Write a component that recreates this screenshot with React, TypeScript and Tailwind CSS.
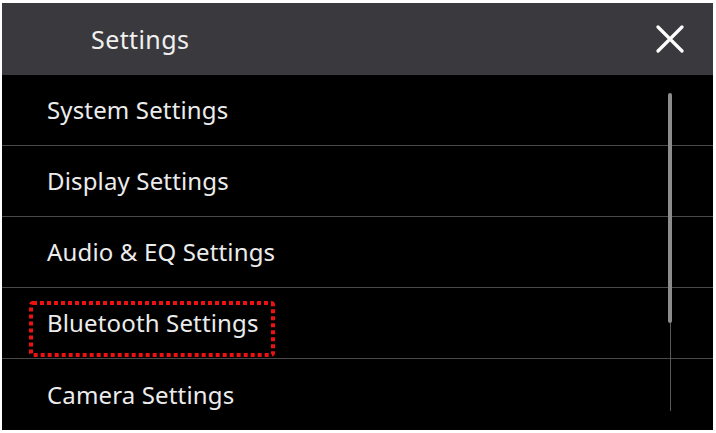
const items = [
  'System Settings',
  'Display Settings',
  'Audio & EQ Settings',
  'Bluetooth Settings',
  'Camera Settings',
]

function Row({ label, highlighted, last }: { label: string; highlighted?: boolean; last?: boolean }) {
  return (
    <div
      className={`relative flex h-[71px] items-center pl-[45px] ${last ? '' : 'border-b border-[#4a4a4a]'}`}
    >
      <span className="text-[24px] leading-none tracking-[0.15px] text-[#ececec]">{label}</span>
      {highlighted && (
        <svg className="absolute left-[27px] top-[13px]" width="246" height="56">
          <rect
            x="2"
            y="2"
            width="242"
            height="52"
            rx="2"
            fill="none"
            stroke="#ee1111"
            strokeWidth="4"
            strokeDasharray="4 3"
          />
        </svg>
      )}
    </div>
  )
}

export default function App() {
  return (
    <div className="h-[433px] w-[716px] bg-white pt-[3px] pb-[3px] pl-[2px] pr-[3px]">
      <div
        className="relative flex h-full flex-col bg-black"
        style={{ fontFamily: '"Noto Sans", "Open Sans", sans-serif' }}
      >
        <div className="flex h-[72px] items-center justify-between bg-[#3a3a3e] pl-[89px] pr-[29px]">
          <span className="text-[25px] leading-none tracking-[0.4px] text-[#f0f0f0]">Settings</span>
          <svg width="28" height="28" viewBox="0 0 28 28" className="text-white">
            <path d="M2 2 L26 26 M26 2 L2 26" stroke="currentColor" strokeWidth="3.2" strokeLinecap="round" />
          </svg>
        </div>
        <div className="flex flex-col">
          {items.map((label, i) => (
            <Row
              key={label}
              label={label}
              highlighted={label === 'Bluetooth Settings'}
              last={i === items.length - 1}
            />
          ))}
        </div>

        {/* scrollbar */}
        <div className="absolute left-[666px] top-[90px] flex h-[318px] w-[4px] flex-col items-center">
          <div className="h-[230px] w-[4px] rounded-full bg-[#8c8c8c]" />
          <div className="w-[1px] flex-1 bg-[#5a5a5a]" />
        </div>
      </div>
    </div>
  )
}
